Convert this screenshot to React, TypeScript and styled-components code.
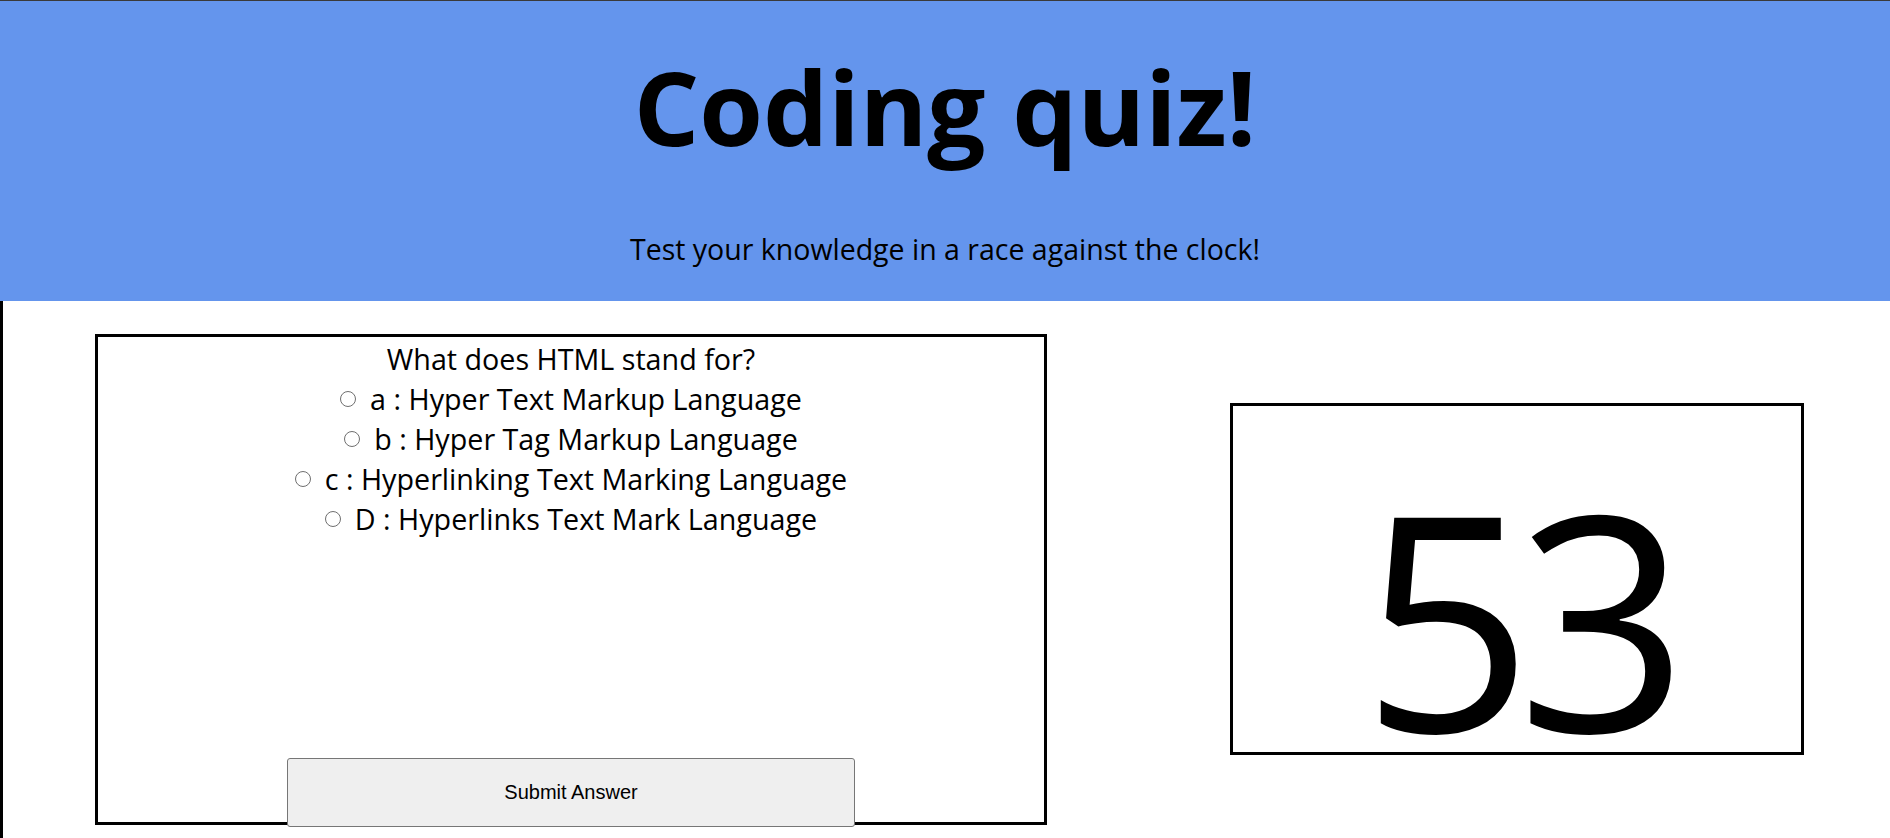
import React from "react";
import styled, { createGlobalStyle } from "styled-components";

const GlobalStyle = createGlobalStyle`
  html, body {
    margin: 0;
    padding: 0;
    background: #ffffff;
    color: #000000;
    font-family: "Open Sans", "Noto Sans", Arial, sans-serif;
  }
  * { box-sizing: border-box; }
`;

const Page = styled.div`
  display: flex;
  flex-direction: column;
  min-height: 100vh;
`;

const Header = styled.header`
  display: flex;
  flex-direction: column;
  align-items: center;
  gap: 54px;
  height: 301px;
  background: #6495ed;
  border-top: 1px solid #3a3a3a;
  padding: 36px 0 0;
  flex-shrink: 0;
`;

const Title = styled.h1`
  margin: 0;
  font-size: 103px;
  font-weight: 700;
  line-height: 139px;
`;

const Subtitle = styled.p`
  margin: 0;
  font-size: 28.5px;
  font-weight: 400;
  line-height: normal;
`;

const Main = styled.main`
  flex: 1;
  display: flex;
  align-items: flex-start;
  gap: 183px;
  padding: 33px 86px 0 92px;
  border-left: 3px solid #000;
  height: 537px;
`;

const QuizBox = styled.section`
  width: 952px;
  height: 491px;
  border: 3px solid #000;
  display: flex;
  flex-direction: column;
  align-items: center;
  flex-shrink: 0;
`;

const QuestionArea = styled.div`
  height: 421px;
  flex-shrink: 0;
  padding-top: 2px;
  display: flex;
  flex-direction: column;
  align-items: center;
  font-size: 28.7px;
  line-height: 40px;
`;

const Question = styled.div`
  text-align: center;
`;

const Option = styled.label`
  display: flex;
  align-items: center;
  justify-content: center;
  gap: 14px;
`;

const Radio = styled.input`
  appearance: none;
  margin: 0;
  width: 16px;
  height: 16px;
  border: 1px solid #6f6f6f;
  border-radius: 50%;
  background: #fff;
`;

const SubmitButton = styled.button`
  flex-shrink: 0;
  width: 568px;
  height: 69px;
  background: #efefef;
  border: 1px solid #767676;
  border-radius: 3px;
  font-family: "Liberation Sans", Arial, sans-serif;
  font-size: 20px;
  color: #000;
  cursor: pointer;
`;

const TimerBox = styled.section`
  width: 574px;
  height: 352px;
  margin-top: 69px;
  border: 3px solid #000;
  flex-shrink: 0;
  display: flex;
  justify-content: center;
  align-items: flex-end;
  padding-bottom: 16px;
`;

const TimerValue = styled.span`
  font-size: 300px;
  line-height: 0.8;
  font-weight: 400;
  letter-spacing: -16px;
`;

const options = [
  { id: "a", text: "a : Hyper Text Markup Language" },
  { id: "b", text: "b : Hyper Tag Markup Language" },
  { id: "c", text: "c : Hyperlinking Text Marking Language" },
  { id: "d", text: "D : Hyperlinks Text Mark Language" },
];

export default function App() {
  return (
    <>
      <GlobalStyle />
      <Page>
        <Header>
          <Title>Coding quiz!</Title>
          <Subtitle>Test your knowledge in a race against the clock!</Subtitle>
        </Header>
        <Main>
          <QuizBox>
            <QuestionArea>
              <Question>What does HTML stand for?</Question>
              {options.map((o) => (
                <Option key={o.id}>
                  <Radio type="radio" name="answer" value={o.id} />
                  {o.text}
                </Option>
              ))}
            </QuestionArea>
            <SubmitButton type="button">Submit Answer</SubmitButton>
          </QuizBox>
          <TimerBox>
            <TimerValue>53</TimerValue>
          </TimerBox>
        </Main>
      </Page>
    </>
  );
}
